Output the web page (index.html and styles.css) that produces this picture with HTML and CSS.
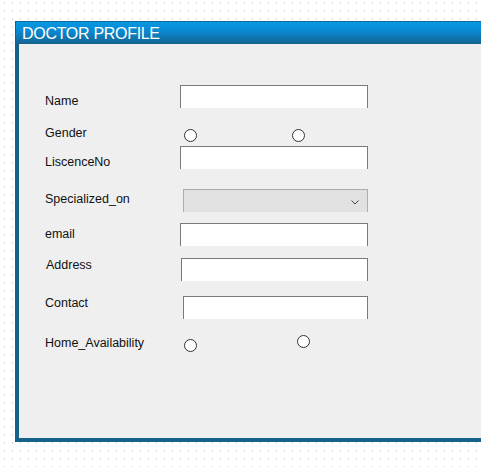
FILE: index.html
```html
<!DOCTYPE html>
<html>
<head>
<meta charset="utf-8">
<title>Doctor Profile</title>
<link rel="stylesheet" href="styles.css">
</head>
<body>
<div class="window">
  <div class="titlebar">DOCTOR PROFILE</div>
  <div class="client">
    <div class="form">
      <div class="row row-name">
        <span class="lbl lbl-off8">Name</span>
        <span class="field"></span>
      </div>
      <div class="row row-gender">
        <span class="lbl">Gender</span>
        <span class="radios radios-gender">
          <span class="radio"></span>
          <span class="radio"></span>
        </span>
      </div>
      <div class="row row-licence">
        <span class="lbl lbl-off8">LiscenceNo</span>
        <span class="field"></span>
      </div>
      <div class="row row-spec">
        <span class="lbl lbl-off2">Specialized_on</span>
        <span class="combo">
          <svg class="chev" width="8" height="5" viewBox="0 0 8 5"><polyline points="0.5,0.5 4,4 7.5,0.5" fill="none" stroke="#444" stroke-width="1"/></svg>
        </span>
      </div>
      <div class="row row-email">
        <span class="lbl lbl-off3">email</span>
        <span class="field"></span>
      </div>
      <div class="row row-address">
        <span class="lbl lbl-address">Address</span>
        <span class="field field-address"></span>
      </div>
      <div class="row row-contact">
        <span class="lbl">Contact</span>
        <span class="field field-contact"></span>
      </div>
      <div class="row row-home">
        <span class="lbl">Home_Availability</span>
        <span class="radios radios-home">
          <span class="radio radio-low"></span>
          <span class="radio"></span>
        </span>
      </div>
    </div>
  </div>
</div>
</body>
</html>
```

FILE: styles.css
```css
html, body {
  margin: 0;
  padding: 0;
  height: 100%;
}
body {
  overflow: hidden;
  background-color: #fff;
  background-image:
    linear-gradient(to bottom, #fff 0, #fff 2px, transparent 2px, transparent 4px, #fff 4px, #fff 8px),
    linear-gradient(to right, #fff 0, #fff 4px, #dcdcdc 4px, #dcdcdc 5px, #fff 5px, #fff 8px);
  background-size: 8px 8px;
  font-family: "Liberation Sans", Arial, sans-serif;
}
.window {
  margin: 21px 0 0 15px;
  display: flex;
  flex-direction: column;
}
.titlebar {
  height: 22px;
  border-top: 1px solid #1a6590;
  border-left: 1px solid #155f88;
  background: linear-gradient(to bottom, #0399e5 0%, #0a87cc 45%, #156390 100%);
  color: #fff;
  font-size: 16px;
  letter-spacing: -0.3px;
  line-height: 23px;
  padding-left: 6px;
  white-space: nowrap;
}
.client {
  height: 394px;
  border-left: 4px solid #14628a;
  border-bottom: 4px solid #14628a;
  background: #efefef;
}
.form {
  display: flex;
  flex-direction: column;
  padding: 41px 0 0 26px;
}
.row {
  display: flex;
  align-items: flex-start;
}
.lbl {
  box-sizing: border-box;
  width: 135px;
  height: 15px;
  flex: none;
  font-size: 12.5px;
  line-height: 15px;
  padding-top: 1px;
  color: #111;
  white-space: nowrap;
}
.lbl-off8 { margin-top: 8px; }
.lbl-off3 { margin-top: 3px; }
.lbl-off2 { margin-top: 2px; }
.lbl-address { padding-left: 1px; }

.field {
  display: block;
  width: 186px;
  height: 22px;
  background: #fff;
  border: 1px solid #7a7a7a;
  border-bottom: none;
}
.field-address { margin: 1px 0 0 1px; width: 185px; }
.field-contact { margin: 1px 0 0 3px; width: 183px; }

.combo {
  display: flex;
  justify-content: flex-end;
  align-items: flex-start;
  margin-left: 3px;
  width: 183px;
  height: 22px;
  background: #e1e1e1;
  border: 1px solid #adadad;
  border-bottom: none;
}
.chev {
  display: block;
  margin: 10px 8px 0 0;
}

.radios {
  display: flex;
  align-items: flex-start;
  margin-left: 4px;
}
.radios-gender { margin-top: 4px; gap: 95px; }
.radios-home { gap: 100px; }
.radio {
  display: block;
  width: 11px;
  height: 11px;
  border: 1px solid #333;
  border-radius: 50%;
  background: #fff;
}
.radio-low { margin-top: 4px; }

.row-name { margin-top: 0; }
.row-gender { margin-top: 17px; }
.row-licence { margin-top: 4px; }
.row-spec { margin-top: 20px; }
.row-email { margin-top: 11px; }
.row-address { margin-top: 11px; }
.row-contact { margin-top: 14px; }
.row-home { margin-top: 16px; }
```
